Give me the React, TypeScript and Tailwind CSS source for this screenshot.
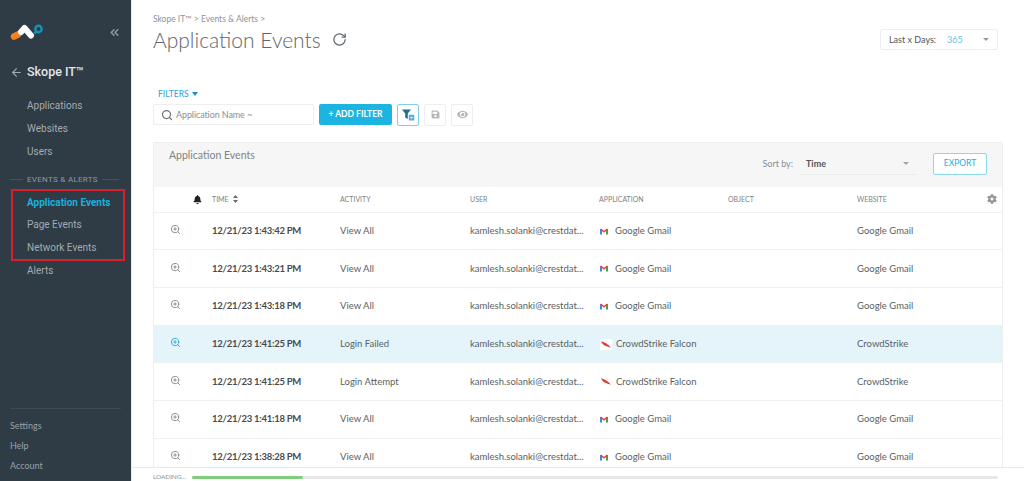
import React from 'react';
import { ArrowLeft, ChevronsLeft, RotateCw, Search, ZoomIn } from 'lucide-react';
import { FaBell, FaCog, FaEye, FaSave } from 'react-icons/fa';

type Row = {
  time: string;
  activity: string;
  app: 'gmail' | 'crowdstrike';
  selected?: boolean;
};

const rows: Row[] = [
  { time: '12/21/23 1:43:42 PM', activity: 'View All', app: 'gmail' },
  { time: '12/21/23 1:43:21 PM', activity: 'View All', app: 'gmail' },
  { time: '12/21/23 1:43:18 PM', activity: 'View All', app: 'gmail' },
  { time: '12/21/23 1:41:25 PM', activity: 'Login Failed', app: 'crowdstrike', selected: true },
  { time: '12/21/23 1:41:25 PM', activity: 'Login Attempt', app: 'crowdstrike' },
  { time: '12/21/23 1:41:18 PM', activity: 'View All', app: 'gmail' },
  { time: '12/21/23 1:38:28 PM', activity: 'View All', app: 'gmail' },
];

function Logo() {
  return (
    <svg width="34" height="22" viewBox="0 0 34 22" fill="none">
      <path d="M4 14.5 L8 12.5" stroke="#f5821f" strokeWidth="6.5" strokeLinecap="round" />
      <path d="M11 10 L14.5 6 L21 13.5" stroke="#ffffff" strokeWidth="6" strokeLinecap="round" strokeLinejoin="round" />
      <path d="M24.5 11.5 L26 9.5" stroke="#1593b8" strokeWidth="2.5" />
      <circle cx="28.5" cy="7" r="3.2" stroke="#1593b8" strokeWidth="2.4" />
    </svg>
  );
}

function GmailIcon() {
  return (
    <svg width="8" height="7" viewBox="0 0 8 7" className="shrink-0">
      <rect x="0" y="1" width="2" height="5.5" fill="#4285f4" />
      <rect x="6" y="1" width="2" height="5.5" fill="#34a853" />
      <path d="M0.6 1 L4 3.8 L7.4 1" stroke="#ea4335" strokeWidth="1.5" fill="none" />
    </svg>
  );
}

function CrowdIcon({ selected }: { selected?: boolean }) {
  return (
    <div className={`w-3 h-[11px] shrink-0 flex items-center justify-center ${selected ? 'bg-white' : ''}`}>
      <svg width="10" height="7" viewBox="0 0 10 7">
        <path d="M0 0.3 C3 0.8 7 3 10 6.8 C8 6 6.5 6 5 5 C3 4.6 1.2 2.8 0 0.3 Z" fill="#e23b2e" />
      </svg>
    </div>
  );
}

function SideLink({ label, active }: { label: string; active?: boolean }) {
  return (
    <div className={`h-[22.67px] flex items-center pl-[27px] text-[10px] ${active ? 'text-[#1cb0dc] font-bold' : 'text-[#a3abb0]'}`}>
      {label}
    </div>
  );
}

function Sidebar() {
  return (
    <div className="w-[131px] h-full shrink-0 bg-[#2f3c46] flex flex-col font-['Roboto',sans-serif]">
      <div className="h-[64px] shrink-0 flex items-start justify-between pl-[10px] pr-[10px] pt-[22px]">
        <Logo />
        <ChevronsLeft size={13} strokeWidth={3} className="text-[#8c979e] mt-[4px]" />
      </div>
      <div className="flex items-center h-[16px] pl-[10px] gap-[4px] text-[#e3e6e8] text-[12.5px] font-medium">
        <ArrowLeft size={13} className="text-[#a3abb0]" />
        <span>Skope IT™</span>
      </div>
      <div className="mt-[14.4px]">
        <SideLink label="Applications" />
        <SideLink label="Websites" />
        <SideLink label="Users" />
      </div>
      <div className="mt-[10.6px] flex items-center gap-[4px] pl-[10px] pr-[12px] h-[14px]">
        <div className="w-[13px] h-px bg-[#46535c]" />
        <span className="text-[8px] text-[#8f999f] whitespace-nowrap tracking-[0.3px]">EVENTS &amp; ALERTS</span>
        <div className="flex-1 h-px bg-[#46535c]" />
      </div>
      <div className="ml-[11px] mr-[6px] mt-[2px] border-2 border-[#d6202c]">
        <div className="-ml-[13px]">
          <SideLink label="Application Events" active />
          <SideLink label="Page Events" />
          <SideLink label="Network Events" />
        </div>
      </div>
      <div className="-mt-[2px]">
        <SideLink label="Alerts" />
      </div>
      <div className="mt-auto border-t border-[#3d4a53] mx-[10px] pt-[9px] pb-[8px] flex flex-col gap-[5px] font-['Lato',sans-serif] text-[9px] text-[#97a1a7]">
        <div className="h-[15px] flex items-center">Settings</div>
        <div className="h-[15px] flex items-center">Help</div>
        <div className="h-[15px] flex items-center">Account</div>
      </div>
    </div>
  );
}

function FilterIcon() {
  return (
    <svg width="14" height="14" viewBox="0 0 14 14">
      <path d="M1 1.5 H10 L6.8 5.5 V11 L4.2 9.5 V5.5 Z" fill="#1d6f91" />
      <rect x="7.8" y="6.8" width="5.4" height="5.8" rx="0.5" fill="#5aa9d6" />
      <rect x="9.3" y="8.8" width="2.4" height="1.6" fill="#d7ecf7" />
    </svg>
  );
}

function Cols({ children, className }: { children: React.ReactNode; className?: string }) {
  return (
    <div className={`grid grid-cols-[58px_128px_130px_129px_129px_129px_1fr] items-center ${className ?? ''}`}>
      {children}
    </div>
  );
}

function EventRow({ row }: { row: Row }) {
  const appName = row.app === 'gmail' ? 'Google Gmail' : 'CrowdStrike Falcon';
  const site = row.app === 'gmail' ? 'Google Gmail' : 'CrowdStrike';
  return (
    <Cols className={`h-[37.67px] border-b border-[#eef0f1] text-[9.5px] text-[#5a5f63] ${row.selected ? 'bg-[#e5f4fa]' : 'bg-white'}`}>
      <div className="pl-[16px] -mt-[3px]">
        <ZoomIn size={11} className={row.selected ? 'text-[#2aa8d8]' : 'text-[#7d8b92]'} />
      </div>
      <div className="font-bold text-[#4a4a4a] whitespace-nowrap tracking-[-0.25px]">{row.time}</div>
      <div>{row.activity}</div>
      <div className="whitespace-nowrap">kamlesh.solanki@crestdat...</div>
      <div className={`flex items-center whitespace-nowrap pl-px ${row.app === 'gmail' ? 'gap-[7px]' : 'gap-[4px]'}`}>
        {row.app === 'gmail' ? <GmailIcon /> : <CrowdIcon selected={row.selected} />}
        <span>{appName}</span>
      </div>
      <div />
      <div>{site}</div>
    </Cols>
  );
}

function EventsPanel() {
  return (
    <div className="mt-[16px] mr-[21px] border border-[#eeeeee] border-b-0 rounded-t-[2px]">
      <div className="h-[44px] bg-[#f6f6f6] flex items-start pl-[15px] pr-[15px]">
        <div className="text-[10.5px] text-[#7e8487] mt-[5px]">Application Events</div>
        <div className="ml-auto flex items-center mt-[10px]">
          <span className="text-[9px] text-[#888e92] mr-[6px]">Sort by:</span>
          <div className="w-[118px] h-[22px] flex items-center justify-between pl-[7px] pr-[8px] border-b border-[#ebebeb] text-[9px] font-bold text-[#555]">
            <span>Time</span>
            <span className="w-0 h-0 border-x-[3px] border-x-transparent border-t-[3px] border-t-[#a3a3a3]" />
          </div>
          <div className="ml-[16px] w-[54px] h-[22px] border border-[#8bd7ee] rounded-[2px] bg-white flex items-center justify-center text-[8.5px] text-[#27aedb]">
            EXPORT
          </div>
        </div>
      </div>
      <Cols className="h-[26px] bg-white border-b border-[#eef0f1] text-[7px] text-[#7c8285]">
        <div className="pl-[39px]">
          <FaBell size={9} className="text-[#222]" />
        </div>
        <div className="flex items-center gap-[4px]">
          TIME
          <svg width="5" height="8" viewBox="0 0 5 8"><path d="M2.5 0 L5 3 H0 Z M2.5 8 L0 5 H5 Z" fill="#6b6b6b" /></svg>
        </div>
        <div>ACTIVITY</div>
        <div>USER</div>
        <div>APPLICATION</div>
        <div>OBJECT</div>
        <div className="flex justify-between pr-[5px]">
          WEBSITE
          <FaCog size={10} className="text-[#8f959a]" />
        </div>
      </Cols>
      {rows.map((row, i) => (
        <EventRow key={i} row={row} />
      ))}
    </div>
  );
}

export default function App() {
  return (
    <div className="w-[1024px] h-[481px] flex overflow-hidden bg-white font-['Lato',sans-serif]">
      <Sidebar />
      <div className="flex-1 min-w-0 h-full flex flex-col border-l border-[#e8edf0]">
        <div className="flex-1 min-h-0 overflow-hidden pl-[21px]">
          <div className="flex items-start justify-between pr-[26px]">
            <div className="pt-[13px]">
              <div className="text-[8.5px] text-[#8e9397] leading-[12px]">Skope IT™ &gt; Events &amp; Alerts &gt;</div>
              <div className="flex items-center gap-[11px] mt-[1px]">
                <span className="text-[21px] font-light leading-[27px] text-[#5f666b]">Application Events</span>
                <RotateCw size={15} className="text-[#5f6b70]" />
              </div>
            </div>
            <div className="mt-[29px] w-[118px] h-[21px] border border-[#eeeeee] rounded-[2px] flex items-center pl-[8px] pr-[8px] text-[9px] text-[#555]">
              <span>Last x Days:</span>
              <span className="ml-[11px] text-[#62bfe4]">365</span>
              <span className="ml-auto w-0 h-0 border-x-[3px] border-x-transparent border-t-[3px] border-t-[#999]" />
            </div>
          </div>
          <div className="mt-[35px] flex items-center gap-[3px] text-[8.5px] font-medium text-[#37a9d8]">
            <span className="pl-[5px]">FILTERS</span>
            <span className="w-0 h-0 border-x-[3.5px] border-x-transparent border-t-[4px] border-t-[#1c8fc0]" />
          </div>
          <div className="mt-[3px] flex items-center">
            <div className="w-[161px] h-[21px] border border-[#eeeeee] rounded-[2px] flex items-center pl-[7px] gap-[3px] text-[9px] tracking-[-0.1px] text-[#8a8f93]">
              <Search size={12} className="text-[#6f7579]" strokeWidth={2.5} />
              <span>Application Name ~</span>
            </div>
            <div className="ml-[5px] w-[73px] h-[21px] rounded-[2px] bg-[#1cb4e0] text-white text-[8.5px] font-bold flex items-center justify-center">
              + ADD FILTER
            </div>
            <div className="ml-[5px] w-[22px] h-[22px] border border-[#7fcfe8] rounded-[2px] flex items-center justify-center">
              <FilterIcon />
            </div>
            <div className="ml-[5px] w-[22px] h-[22px] border border-[#eeeeee] rounded-[2px] flex items-center justify-center">
              <FaSave size={9} className="text-[#b4b8ba]" />
            </div>
            <div className="ml-[5px] w-[22px] h-[22px] border border-[#eeeeee] rounded-[2px] flex items-center justify-center">
              <FaEye size={11} className="text-[#b4b8ba]" />
            </div>
          </div>
          <EventsPanel />
        </div>
        <div className="h-[14px] shrink-0 border-t border-[#e8e8e8] bg-white flex items-center pt-[5px] pl-[21px] pr-[26px] gap-[6px]">
          <span className="text-[6.5px] text-[#8a8f93] tracking-[-0.1px]">LOADING...</span>
          <div className="flex-1 h-[3px] bg-[#e8e8e8] rounded-full">
            <div className="h-full w-[111px] bg-[#7fcf7a] rounded-full" />
          </div>
        </div>
      </div>
    </div>
  );
}
